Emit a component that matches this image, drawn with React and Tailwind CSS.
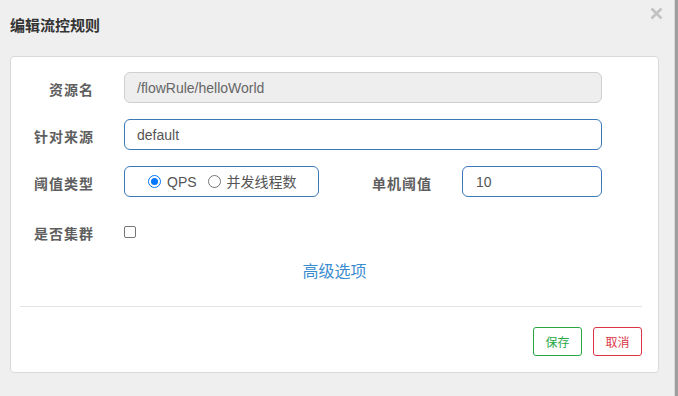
const cjk = { fontFamily: '"Microsoft YaHei", "Noto Sans CJK SC", "Liberation Sans", sans-serif' };
const latin = { fontFamily: '"Liberation Sans", Arial, sans-serif' };

const Label = ({ children, className = '' }) => (
  <div
    className={`h-[31px] text-[14px] font-semibold tracking-[1px] text-[#5e5e5e] text-right leading-[34px] ${className}`}
    style={cjk}
  >
    {children}
  </div>
);

const Radio = ({ checked, children }) => (
  <label className="flex items-center gap-[6px] text-[14px] text-[#555]">
    {checked ? (
      <span className="w-[13px] h-[13px] rounded-full border-[1.5px] border-[#0075ff] flex items-center justify-center bg-white">
        <span className="w-[7px] h-[7px] rounded-full bg-[#0075ff]" />
      </span>
    ) : (
      <span className="w-[13px] h-[13px] rounded-full border border-[#767676] bg-white" />
    )}
    <span>{children}</span>
  </label>
);

export default function App() {
  return (
    <div className="w-[678px] h-[396px] flex bg-[#efefef] overflow-hidden" style={cjk}>
      <div className="flex-1 relative pl-[10px] pt-[15px]">
        <button className="absolute left-[650px] top-[7px] w-[13px] h-[13px]">
          <svg width="13" height="13" viewBox="0 0 13 13">
            <path d="M1.5 1.5 L11.5 11.5 M11.5 1.5 L1.5 11.5" stroke="#c2c2c2" strokeWidth="2.6" />
          </svg>
        </button>
        <h4 className="text-[15px] font-bold text-[#333] leading-[20px]">编辑流控规则</h4>

        <div className="mt-[21px] w-[649px] h-[317px] bg-white border border-[#d9d9d9] rounded-[4px] pt-[15px]">
          <div className="flex items-center">
            <Label className="w-[83px]">资源名</Label>
            <div
              className="ml-[30px] w-[478px] h-[31px] rounded-[6px] border border-[#cfcfcf] bg-[#eeeeee] px-[12px] text-[14px] leading-[30px] text-[#666]"
              style={latin}
            >
              /flowRule/helloWorld
            </div>
          </div>

          <div className="flex items-center mt-[16px]">
            <Label className="w-[83px]">针对来源</Label>
            <div
              className="ml-[30px] w-[478px] h-[31px] rounded-[6px] border border-[#3a78b8] bg-white px-[12px] text-[14px] leading-[30px] text-[#555]"
              style={latin}
            >
              default
            </div>
          </div>

          <div className="flex items-center mt-[16px]">
            <Label className="w-[83px]">阈值类型</Label>
            <div className="ml-[30px] w-[195px] h-[31px] rounded-[6px] border border-[#3a78b8] flex items-center pl-[23px] gap-[11px]">
              <Radio checked>
                <span style={latin}>QPS</span>
              </Radio>
              <Radio>并发线程数</Radio>
            </div>
            <Label className="w-[113px]">单机阈值</Label>
            <div
              className="ml-[30px] w-[140px] h-[31px] rounded-[6px] border border-[#3a78b8] bg-white px-[13px] text-[14px] leading-[30px] text-[#555]"
              style={latin}
            >
              10
            </div>
          </div>

          <div className="flex items-center mt-[19px] h-[31px]">
            <Label className="w-[83px]">是否集群</Label>
            <span className="ml-[30px] w-[12px] h-[12px] rounded-[2px] border border-[#767676] bg-white" />
          </div>

          <div className="mt-[12px] h-[22px] leading-[22px] text-center text-[16px] text-[#3c8dcf]">
            <a>高级选项</a>
          </div>

          <div className="mt-[25px] ml-[9px] mr-[16px] border-t border-[#e3e3e3]" />

          <div className="mt-[20px] mr-[16px] flex justify-end gap-[11px]">
            <button className="w-[49px] h-[29px] rounded-[3px] border border-[#28a745] text-[12px] text-[#28a745] bg-white">
              保存
            </button>
            <button className="w-[49px] h-[29px] rounded-[3px] border border-[#dc3545] text-[12px] text-[#dc3545] bg-white">
              取消
            </button>
          </div>
        </div>
      </div>
      <div className="w-[4px] h-full border-l border-[#d8d8d8] bg-[#9e9e9e]" />
    </div>
  );
}
